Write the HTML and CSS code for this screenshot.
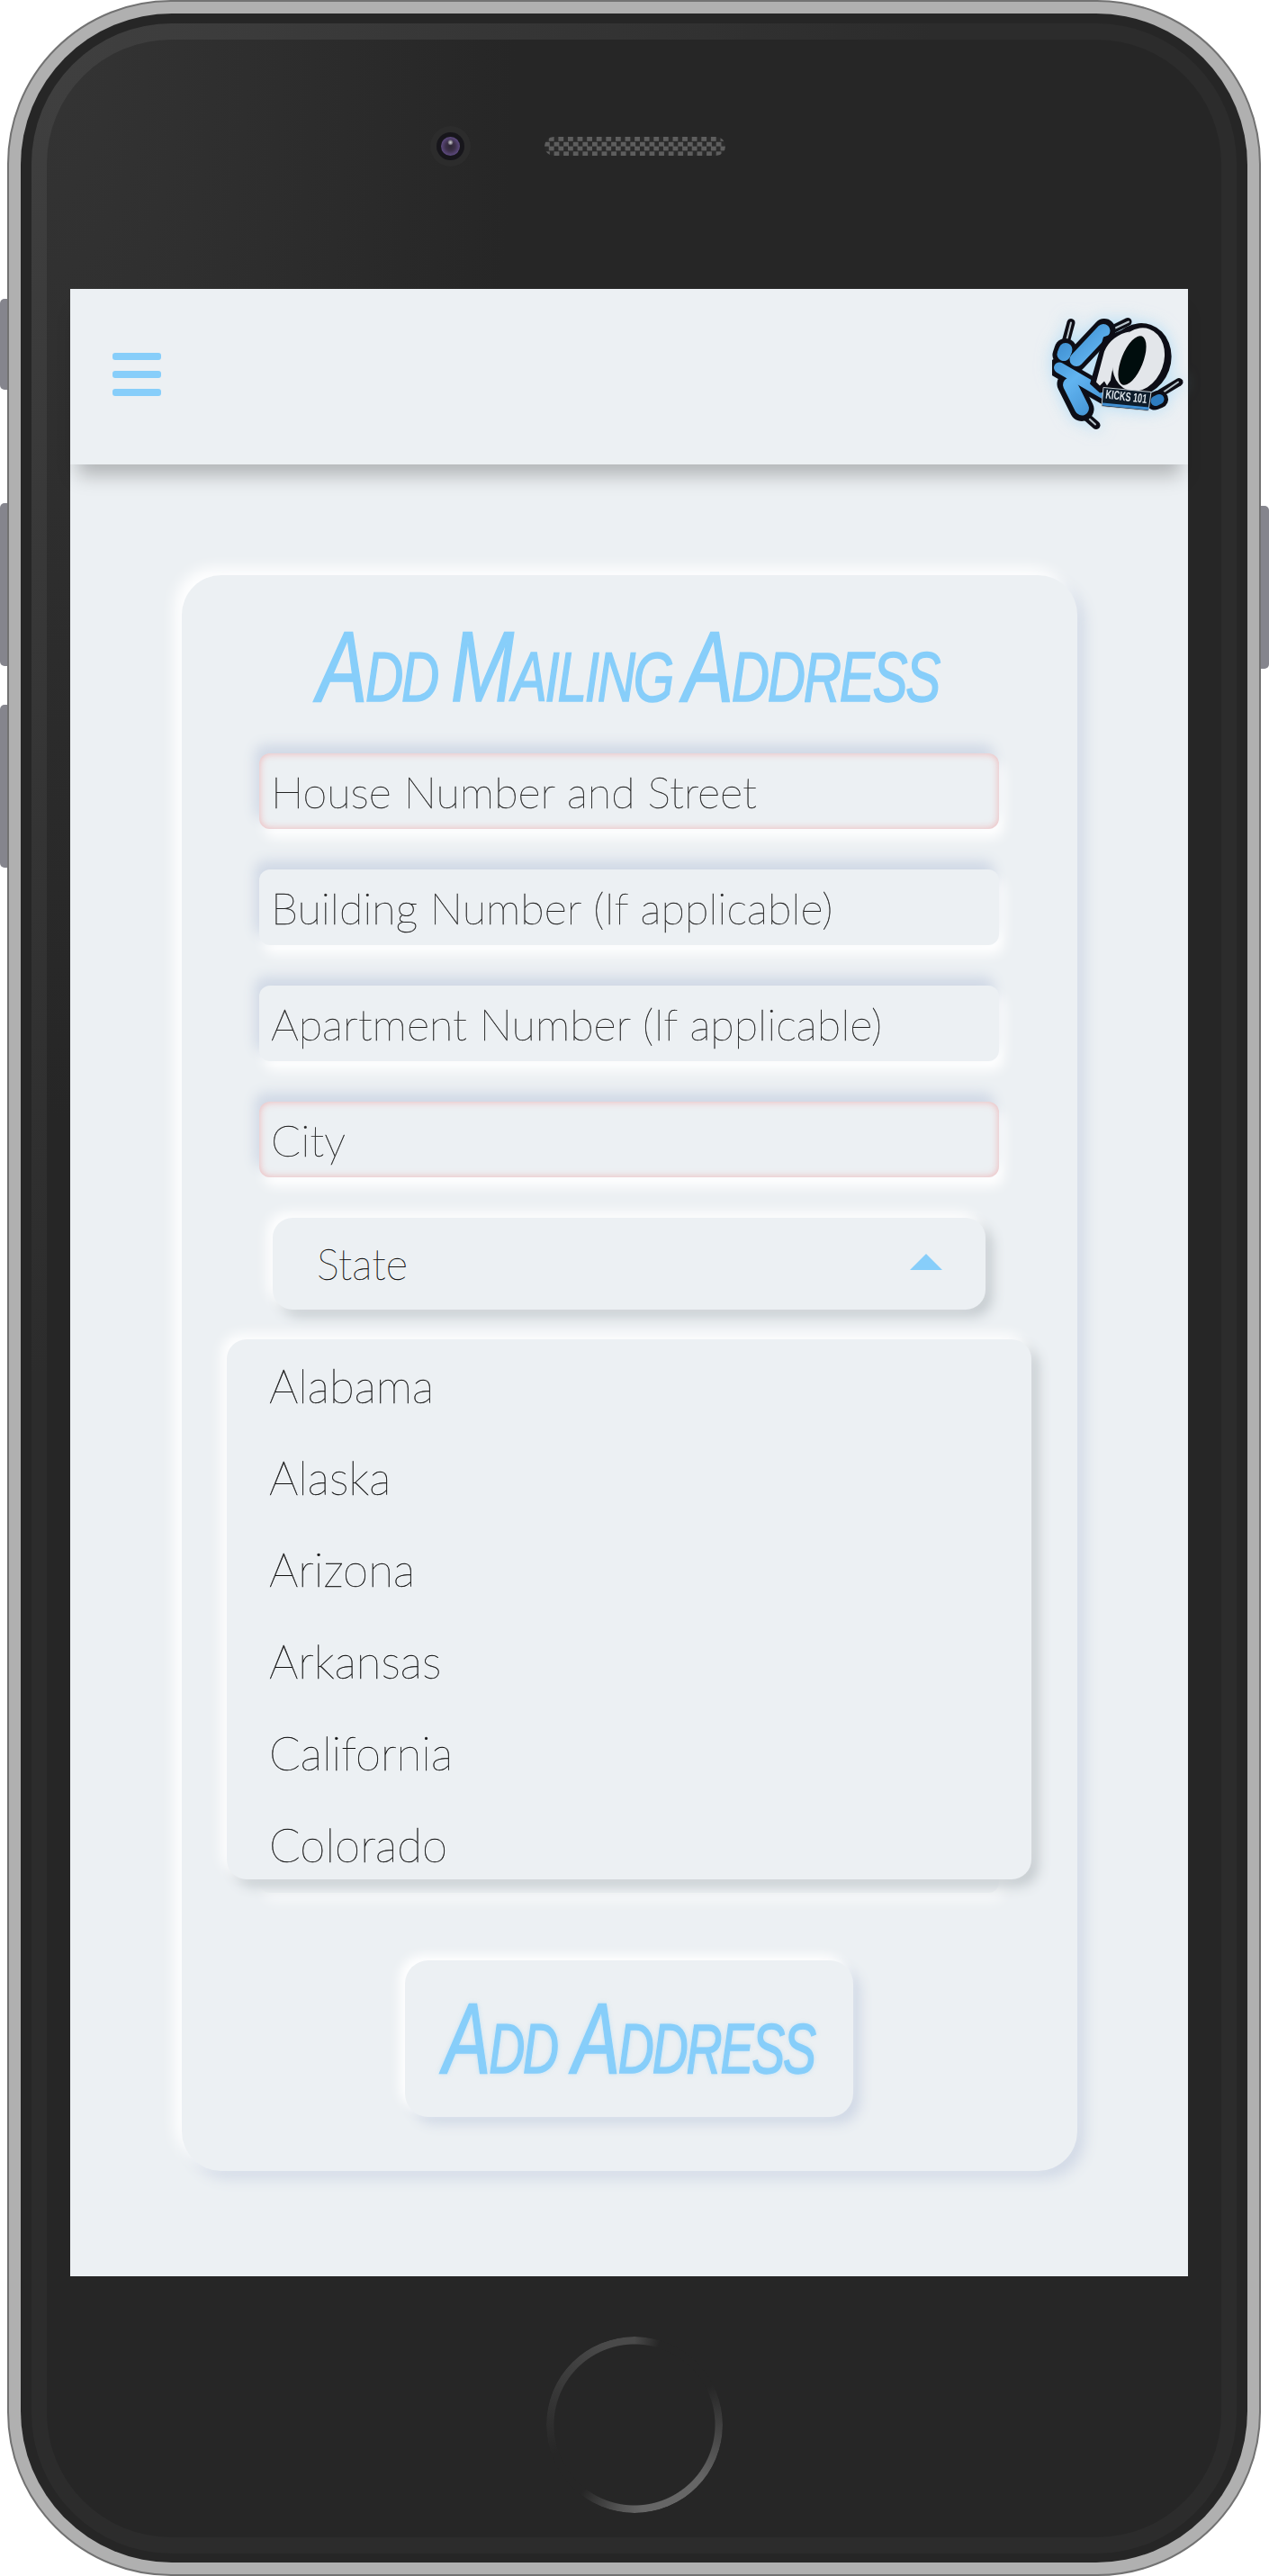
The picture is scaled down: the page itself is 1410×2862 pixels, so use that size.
FILE: index.html
```html
<!DOCTYPE html>
<html lang="en">
<head>
<meta charset="utf-8">
<title>Add Mailing Address</title>
<link rel="stylesheet" href="styles.css">
</head>
<body>
<div class="side-buttons side-left">
  <span class="side-btn side-btn-short"></span>
  <span class="side-btn side-btn-a"></span>
  <span class="side-btn side-btn-b"></span>
</div>
<div class="phone">
  <div class="band-dark">
    <div class="band-light">
      <div class="face">
        <div class="bezel-top">
          <div class="camera"><div class="camera-ring"><div class="lens"></div></div></div>
          <div class="speaker"></div>
        </div>
        <div class="screen">
          <header class="topbar">
            <div class="burger"><span></span><span></span><span></span></div>
            <svg class="logo" viewBox="30 28.5 160 140" width="160" height="140">
              <defs>
                <linearGradient id="lace" gradientUnits="userSpaceOnUse" x1="40" y1="40" x2="130" y2="140">
                  <stop offset="0" stop-color="#2f7fc4"/>
                  <stop offset=".45" stop-color="#62b4f0"/>
                  <stop offset="1" stop-color="#2f7cc0"/>
                </linearGradient>
                <filter id="soft" x="-5%" y="-5%" width="110%" height="110%"><feGaussianBlur stdDeviation=".45"/></filter>
              </defs>
              <g filter="url(#soft)">
                <g fill="none" stroke-linecap="round">
                  <path d="M60 38 L54 60" stroke="#0b0f14" stroke-width="9"/>
                  <path d="M123 37 L103 47" stroke="#0b0f14" stroke-width="9"/>
                  <path d="M88 152 L72 138" stroke="#0b0f14" stroke-width="9"/>
                  <path d="M180 104 L160 116" stroke="#0b0f14" stroke-width="9"/>
                  <path d="M60 38 L55 58" stroke="#b9c4cc" stroke-width="2"/>
                  <path d="M124 37 L105 46" stroke="#b9c4cc" stroke-width="2"/>
                  <path d="M87 151 L75 140" stroke="#b9c4cc" stroke-width="2"/>
                  <path d="M179 104 L163 115" stroke="#b9c4cc" stroke-width="2"/>
                  <path d="M54 68 L52 74" stroke="#0b0f14" stroke-width="25"/>
                  <path d="M65 80 L97 46" stroke="#0b0f14" stroke-width="25"/>
                  <path d="M46 88 L98 118" stroke="#0b0f14" stroke-width="22"/>
                  <path d="M58 106 L72 134" stroke="#0b0f14" stroke-width="27"/>
                  <path d="M153 125 L158 123" stroke="#0b0f14" stroke-width="20"/>
                  <path d="M54 68 L52 73" stroke="url(#lace)" stroke-width="15"/>
                  <path d="M66 79 L96 47" stroke="url(#lace)" stroke-width="15"/>
                  <path d="M47 88 L97 117" stroke="url(#lace)" stroke-width="12"/>
                  <path d="M59 107 L72 133" stroke="url(#lace)" stroke-width="16"/>
                  <path d="M154 125 L158 123" stroke="url(#lace)" stroke-width="11"/>
                </g>
                <path class="logo-ink" d="M128 42 L96 54 L81 106 L92 116 L114 112 Z"/>
                <ellipse class="logo-ink" cx="135" cy="79" rx="36" ry="41" transform="rotate(20 135 79)"/>
                <path class="logo-white" d="M125 48 C113 50 102 58 97 70 L88 104 L92 108 L97 103 L100 108 L104 102 C106 85 113 65 125 48 Z"/>
                <ellipse class="logo-white" cx="135" cy="79" rx="28" ry="36" transform="rotate(20 135 79)"/>
                <ellipse class="logo-hole" cx="128" cy="80" rx="12" ry="29" transform="rotate(22 128 80)"/>
                <path class="logo-banner" d="M96 110 L149 115 L146 136 L94 131 Z"/>
                <path class="logo-stripe" d="M95 127 L147 132 L146 135 L95 130 Z"/>
                <text class="logo-text" x="98" y="122" textLength="46" lengthAdjust="spacingAndGlyphs" transform="rotate(7 98 122)">KICKS 101</text>
              </g>
            </svg>
          </header>
          <main class="page">
            <section class="card">
              <h1 class="card-title"><span class="hand">Add Mailing Address</span></h1>
              <div class="fields">
                <div class="field field-error">House Number and Street</div>
                <div class="field">Building Number (If applicable)</div>
                <div class="field">Apartment Number (If applicable)</div>
                <div class="field field-error">City</div>
                <div class="state">
                  <div class="state-toggle">
                    <span>State</span>
                    <span class="caret"></span>
                  </div>
                  <ul class="state-list">
                    <li>Alabama</li>
                    <li>Alaska</li>
                    <li>Arizona</li>
                    <li>Arkansas</li>
                    <li>California</li>
                    <li>Colorado</li>
                  </ul>
                </div>
                <div class="field field-covered"></div>
              </div>
              <button class="submit" type="button"><span class="hand">Add Address</span></button>
            </section>
          </main>
        </div>
        <div class="bezel-bottom">
          <div class="home"></div>
        </div>
      </div>
    </div>
  </div>
</div>
<div class="side-buttons side-right">
  <span class="side-btn side-btn-power"></span>
</div>
</body>
</html>
```
FILE: styles.css
```css
* { box-sizing: border-box; }
html, body { margin: 0; padding: 0; background: #fff; }
body {
  display: flex;
  align-items: flex-start;
  width: 1410px;
  height: 2862px;
  overflow: hidden;
  font-family: "Lato", "Liberation Sans", sans-serif;
}

/* hardware side buttons */
.side-buttons { display: flex; flex-direction: column; width: 8px; flex: none; }
.side-left { padding-top: 332px; }
.side-right { width: 9px; padding-top: 562px; }
.side-btn { display: block; background: #85858d; }
.side-left .side-btn { border-radius: 5px 0 0 5px; width: 8px; }
.side-btn-short { height: 101px; }
.side-btn-a { height: 181px; margin-top: 126px; }
.side-btn-b { height: 181px; margin-top: 43px; }
.side-btn-power { height: 181px; border-radius: 0 5px 5px 0; }

/* phone shell */
.phone {
  width: 1393px;
  height: 2862px;
  flex: none;
  padding: 13px;
  background: #b0b0b0;
  border: 2px solid #727272;
  border-radius: 182px;
}
.band-dark {
  height: 100%;
  padding: 11px 12px 10px;
  background: #262626;
  border-radius: 168px;
}
.band-light {
  height: 100%;
  padding: 18px 17px;
  background: radial-gradient(1000px 1500px at 0 0, #404040 0, #2c2c2c 100%);
  border-radius: 156px;
}
.face {
  height: 100%;
  display: flex;
  flex-direction: column;
  background: radial-gradient(520px 1200px at 0 0, #343434 0, #262626 100%);
  border-radius: 138px;
}
.bezel-top {
  flex: none;
  display: flex;
  align-items: center;
  align-self: flex-start;
  gap: 82px;
  height: 141px;
  padding: 96px 0 0 426px;
  margin-bottom: 136px;
}
.camera {
  width: 45px;
  height: 45px;
  padding: 7px;
  border-radius: 50%;
  background: #2c2c2c;
}
.camera-ring {
  width: 31px;
  height: 31px;
  padding: 5px;
  border-radius: 50%;
  background: #17161b;
}
.lens {
  width: 21px;
  height: 21px;
  border-radius: 50%;
  background:
    radial-gradient(circle at 50% 30%, #cfcfd4 0, #8b8890 10%, transparent 18%),
    radial-gradient(circle at 50% 50%, #2d2735 0, #3c3049 35%, #5d4a7f 70%, #6b5a8a 100%);
}
.speaker {
  width: 201px;
  height: 21px;
  border-radius: 11px;
  background: repeating-conic-gradient(#5e5e5e 0 25%, #2a2a2a 0 50%) 0 0 / 10.6px 10.6px;
}

/* screen */
.screen {
  margin-left: 26px;
  width: 1242px;
  height: 2208px;
  flex: none;
  background: #ecf0f3;
  display: flex;
  flex-direction: column;
}
.topbar {
  height: 195px;
  flex: none;
  display: flex;
  align-items: center;
  justify-content: space-between;
  padding-left: 47px;
  background: #ecf0f3;
  box-shadow: 0 20px 20px -8px rgba(0, 0, 0, .25);
  position: relative;
}
.burger { display: flex; flex-direction: column; gap: 12px; width: 54px; margin-top: -5px; }
.burger span { display: block; height: 8px; border-radius: 3px; background: #87cefa; }
.logo { display: block; filter: drop-shadow(0 0 9px rgba(135, 206, 250, .55)); }
.logo-ink { fill: #0b0f14; }
.logo-white { fill: #e3e6ea; }
.logo-hole { fill: #05070a; }
.logo-banner { fill: #0b1a2a; stroke: #c4ccd2; stroke-width: 1; }
.logo-stripe { fill: #3f8fd2; }
.logo-text { font-family: "Liberation Sans", sans-serif; font-size: 14px; font-weight: 700; fill: #dfe6ea; }

.page { padding: 123px 123px 0 124px; }
.card {
  height: 1773px;
  padding: 198px 87px 0 86px;
  background: #ecf0f3;
  border-radius: 44px;
  box-shadow: -8px -8px 16px #fff, 8px 8px 16px #d1d9e6;
  position: relative;
  display: flex;
  flex-direction: column;
  align-items: center;
}
.card-title {
  position: absolute;
  left: -4px;
  right: 0;
  top: 42px;
  margin: 0;
  display: flex;
  justify-content: center;
  white-space: nowrap;
  font-weight: 400;
  font-size: 112px;
  line-height: 120px;
}
.hand {
  display: inline-block;
  flex: none;
  font-family: "Liberation Sans", sans-serif;
  font-style: italic;
  font-variant: small-caps;
  font-weight: 400;
  font-size: 112px;
  line-height: 120px;
  letter-spacing: -3px;
  word-spacing: -8px;
  color: #87cefa;
  -webkit-text-stroke: 1.5px #87cefa;
  transform: scaleX(.75);
}
.fields { width: 822px; display: flex; flex-direction: column; gap: 45px; }
.field {
  height: 84px;
  display: flex;
  align-items: center;
  padding-left: 13px;
  border-radius: 12px;
  background: #ecf0f3;
  box-shadow: -5px -10px 14px #d1d9e6, 5px 10px 14px #fff;
  font-weight: 100;
  font-size: 48.5px;
  color: #222;
  -webkit-text-stroke: .4px #222;
}
.field-error {
  box-shadow: inset 0 0 8px rgba(240, 130, 130, .55), -5px -10px 14px #d1d9e6, 5px 10px 14px #fff;
}
.field-covered {
  margin-bottom: 30px;
  box-shadow: 5px 10px 14px rgba(255, 255, 255, .55);
}

.state { position: relative; height: 102px; margin: 0 15px 519px; }
.state-toggle {
  height: 102px;
  display: flex;
  align-items: center;
  justify-content: space-between;
  padding: 0 48px 0 49px;
  border-radius: 22px;
  background: #ecf0f3;
  box-shadow: -6px -6px 14px #fff, 8px 8px 14px #c6ccd0;
  font-weight: 100;
  font-size: 47px;
  color: #111;
  -webkit-text-stroke: .4px #111;
}
.caret {
  width: 0;
  height: 0;
  border-left: 18px solid transparent;
  border-right: 18px solid transparent;
  border-bottom: 18px solid #87cefa;
  margin-top: -4px;
}
.state-list {
  position: absolute;
  z-index: 2;
  top: 135px;
  left: -51px;
  width: 894px;
  height: 600px;
  margin: 0;
  padding: 0;
  list-style: none;
  overflow: hidden;
  border-radius: 22px;
  background: #ecf0f3;
  box-shadow: -6px -6px 14px #fff, 8px 8px 14px #c6ccd0;
}
.state-list li {
  height: 102px;
  display: flex;
  align-items: center;
  padding-left: 47px;
  font-weight: 100;
  font-size: 51px;
  color: #111;
  -webkit-text-stroke: .4px #111;
}

.submit {
  margin-top: 45px;
  width: 498px;
  height: 174px;
  border: 0;
  padding: 0;
  display: flex;
  align-items: center;
  justify-content: center;
  white-space: nowrap;
  border-radius: 26px;
  background: #ecf0f3;
  box-shadow: -6px -6px 12px #fff, 8px 8px 14px #d1d9e6;
}
.submit .hand {
  transform: scaleX(.71);
  word-spacing: 0;
  text-shadow: 0 0 6px rgba(135, 206, 250, .5);
}

/* home button */
.bezel-bottom {
  flex: 1;
  display: flex;
  justify-content: center;
  align-items: flex-start;
  padding-top: 67px;
}
.home {
  width: 196px;
  height: 196px;
  border-radius: 50%;
  background: conic-gradient(#4a4a4a 0deg, #262626 17deg, #262626 63deg, #666 130deg, #666 175deg, #555 190deg, #262626 218deg, #262626 250deg, #4a4a4a 340deg, #4a4a4a 360deg);
  -webkit-mask: radial-gradient(circle, transparent 89px, #000 90px);
  mask: radial-gradient(circle, transparent 89px, #000 90px);
}
```
